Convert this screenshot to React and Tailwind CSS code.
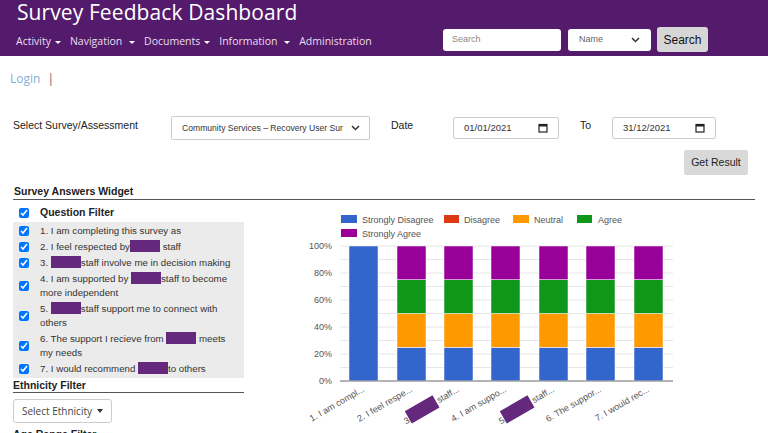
import React from 'react';

const REDACT = 'bg-[#64287c]';

const Redact = () => (
  <span className={`inline-block w-[30px] h-[12px] align-[-2px] ${REDACT}`} />
);

const questions = [
  { id: 1, body: <>1. I am completing this survey as</> },
  { id: 2, body: <>2. I feel respected by<Redact /> staff</> },
  { id: 3, body: <>3. <Redact />staff involve me in decision making</> },
  { id: 4, body: <>4. I am supported by <Redact />staff to become more independent</> },
  { id: 5, body: <>5. <Redact />staff support me to connect with others</> },
  { id: 6, body: <>6. The support I recieve from <Redact /> meets my needs</> },
  { id: 7, body: <>7. I would recommend <Redact />to others</> },
];

const COLORS = {
  sd: '#3366cc',
  d: '#dc3912',
  n: '#ff9900',
  a: '#109618',
  sa: '#990099',
};

const bars = [
  { x: 49, seg: [100, 0, 0, 0, 0] },
  { x: 97, seg: [25, 0, 25, 25, 25] },
  { x: 144, seg: [25, 0, 25, 25, 25] },
  { x: 191, seg: [25, 0, 25, 25, 25] },
  { x: 239, seg: [25, 0, 25, 25, 25] },
  { x: 286, seg: [25, 0, 25, 25, 25] },
  { x: 334, seg: [25, 0, 25, 25, 25] },
];

const labels = ['1. I am compl...', '2. I feel respe...', 'staff...', '4. I am suppo...', 'staff...', '6. The suppor...', '7. I would rec...'];

function Chart() {
  const y0 = 178;
  const h = 135;
  const order = ['sd', 'd', 'n', 'a', 'sa'];
  return (
    <svg width="400" height="230" className="block" style={{ fontFamily: 'Arial, "Liberation Sans", sans-serif' }}>
      {/* legend */}
      <rect x="41" y="12" width="16" height="8" fill={COLORS.sd} />
      <text x="62" y="19.5" fontSize="9" fill="#555">Strongly Disagree</text>
      <rect x="144" y="12" width="15" height="8" fill={COLORS.d} />
      <text x="164" y="19.5" fontSize="9" fill="#555">Disagree</text>
      <rect x="213" y="12" width="16" height="8" fill={COLORS.n} />
      <text x="234" y="19.5" fontSize="9" fill="#555">Neutral</text>
      <rect x="277" y="12" width="15" height="8" fill={COLORS.a} />
      <text x="298" y="19.5" fontSize="9" fill="#555">Agree</text>
      <rect x="41" y="26" width="16" height="8" fill={COLORS.sa} />
      <text x="62" y="33.5" fontSize="9" fill="#555">Strongly Agree</text>

      {/* grid */}
      {Array.from({ length: 11 }).map((_, i) => (
        <line key={i} x1="40" x2="373" y1={y0 - i * 13.5} y2={y0 - i * 13.5} stroke={i === 0 ? '#999' : '#e6e6e6'} strokeWidth="1" />
      ))}
      {[0, 20, 40, 60, 80, 100].map((v) => (
        <text key={v} x="32" y={y0 - (v / 100) * h + 3} fontSize="9" fill="#555" textAnchor="end">{v}%</text>
      ))}

      {/* bars */}
      {bars.map((b, i) => {
        let acc = 0;
        return (
          <g key={i}>
            {b.seg.map((s, j) => {
              if (!s) return null;
              const top = y0 - ((acc + s) / 100) * h;
              const r = <rect key={j} x={b.x} y={top} width="29" height={(s / 100) * h} fill={COLORS[order[j]]} stroke="#fff" strokeWidth="0.5" />;
              acc += s;
              return r;
            })}
          </g>
        );
      })}
      <line x1="40" x2="373" y1={y0} y2={y0} stroke="#999" strokeWidth="1" />

      {/* x labels */}
      {bars.map((b, i) => {
        const cx = b.x + 16;
        const redacted = i === 2 || i === 4;
        return (
          <g key={i} transform={`translate(${cx} ${y0 + 10}) rotate(-30)`}>
            <text x="0" y="0" fontSize="9" fill="#555" textAnchor="end">{labels[i]}</text>
            {redacted && (
              <>
                <text x="-56" y="2" fontSize="9" fill="#555" textAnchor="end">{i === 2 ? '3.' : '5.'}</text>
                <rect x="-58" y="-10" width="32" height="14" fill="#64287c" />
              </>
            )}
          </g>
        );
      })}
    </svg>
  );
}

const Caret = () => (
  <span className="inline-block ml-[4px] align-middle w-0 h-0 border-l-[3px] border-r-[3px] border-t-[3px] border-l-transparent border-r-transparent border-t-white" />
);

const Calendar = () => (
  <svg width="10" height="10" viewBox="0 0 10 10">
    <rect x="1" y="1.5" width="8" height="7.5" fill="none" stroke="#222" strokeWidth="1.2" />
    <rect x="1" y="1.5" width="8" height="2" fill="#222" />
  </svg>
);

const Chevron = () => (
  <svg width="9" height="6" viewBox="0 0 9 6">
    <path d="M1 1l3.5 3.5L8 1" fill="none" stroke="#333" strokeWidth="1.5" />
  </svg>
);

export default function App() {
  return (
    <div className="w-[768px] h-[433px] overflow-hidden bg-white text-[#222]" style={{ fontFamily: 'Arial, "Liberation Sans", sans-serif' }}>
      {/* header */}
      <div className="h-[56px] bg-[#541a6b] flex justify-between">
        <div className="pl-[16px]" style={{ fontFamily: '"Open Sans", sans-serif' }}>
          <div className="text-[21px] leading-[28px] -mt-[2px] text-white tracking-[0.1px] pl-[1px]">Survey Feedback Dashboard</div>
          <div className="flex gap-[9px] mt-[8px] text-[10.5px] leading-[14px] text-[#e8dfee]">
            <span>Activity<Caret /></span>
            <span>Navigation <Caret /></span>
            <span>Documents<Caret /></span>
            <span>Information <Caret /></span>
            <span>Administration</span>
          </div>
        </div>
        <div className="flex items-end gap-[6px] pr-[60px] pb-[4px]">
          <div className="w-[118px] h-[22px] bg-white rounded-[3px] text-[9px] text-[#888] flex items-center px-[9px] mb-[1px]">Search</div>
          <div className="w-[83px] h-[22px] bg-white rounded-[3px] text-[9px] text-[#666] flex items-center justify-between px-[11px] mb-[1px] ml-[1px]">
            <span>Name</span>
            <Chevron />
          </div>
          <div className="w-[51px] h-[25px] bg-[#d6d6d6] rounded-[3px] text-[12px] text-[#111] flex items-center justify-center">Search</div>
        </div>
      </div>

      {/* login */}
      <div className="pl-[10px] pt-[16px] text-[12px] leading-[14px] text-[#86aedb]" style={{ fontFamily: '"Open Sans", sans-serif' }}>
        Login <span className="ml-[4px] text-[#666]">|</span>
      </div>

      {/* form row */}
      <div className="flex items-start mt-[30px] text-[10.5px] leading-[14px]">
        <div className="ml-[13px] w-[158px] mt-[2px]">Select Survey/Assessment</div>
        <div className="w-[199px] h-[24px] border border-[#ccc] rounded-[2px] flex items-center justify-between pl-[10px] pr-[9px] text-[8.6px] text-[#333] whitespace-nowrap overflow-hidden">
          <span>Community Services – Recovery User Sur</span>
          <Chevron />
        </div>
        <div className="ml-[21px] w-[62px] mt-[2px]">Date</div>
        <div className="w-[106px] h-[22px] mt-[1px] border border-[#ccc] rounded-[2px] flex items-center justify-between px-[10px] text-[9.5px] text-[#333]">
          <span>01/01/2021</span>
          <Calendar />
        </div>
        <div className="ml-[21px] w-[32px] mt-[2px]">To</div>
        <div className="w-[104px] h-[22px] mt-[1px] border border-[#ccc] rounded-[2px] flex items-center justify-between px-[10px] text-[9.5px] text-[#333]">
          <span>31/12/2021</span>
          <Calendar />
        </div>
      </div>
      <div className="flex justify-end pr-[20px] mt-[10px]">
        <div className="w-[64px] h-[25px] bg-[#d9d9d9] rounded-[2px] text-[10.5px] text-[#222] flex items-center justify-center">Get Result</div>
      </div>

      {/* widget */}
      <div className="mx-[13px] mt-[9px] border-b-[1.5px] border-[#555] pb-[1px] pl-[1px] text-[10.5px] font-bold leading-[14px]">Survey Answers Widget</div>

      <div className="flex">
        <div className="ml-[13px] w-[231px] shrink-0">
          <div className="flex items-center h-[22px] pt-[3px]">
            <input type="checkbox" defaultChecked className="ml-[6px] w-[10px] h-[10px] accent-[#0075ff]" />
            <span className="ml-[11px] text-[10.5px] font-bold">Question Filter</span>
          </div>
          <div className="bg-[#ebebeb] pt-[1px] pb-[1px]">
            {questions.map((q) => (
              <div key={q.id} className="flex items-center py-[1px]">
                <div className="w-[27px] shrink-0 h-[14px] flex items-center">
                  <input type="checkbox" defaultChecked className="ml-[6px] w-[10px] h-[10px] accent-[#0075ff]" />
                </div>
                <div className="w-[194px] text-[9.7px] leading-[14px] text-[#333]">{q.body}</div>
              </div>
            ))}
          </div>
          <div className="mt-[1px] border-b-[1.5px] border-[#555] pb-[1px] text-[10.5px] font-bold leading-[12px]">Ethnicity Filter</div>
          <div className="mt-[6px] w-[99px] h-[24px] border border-[#ccc] rounded-[3px] flex items-center justify-center text-[10px] text-[#444]" style={{ fontFamily: '"Open Sans", sans-serif' }}>
            Select Ethnicity
            <span className="inline-block ml-[5px] w-0 h-0 border-l-[3.5px] border-r-[3.5px] border-t-[4px] border-l-transparent border-r-transparent border-t-[#333]" />
          </div>
          <div className="mt-[4px] text-[10.5px] font-bold leading-[14px]">Age Range Filter</div>
        </div>
        <div className="ml-[56px] mt-[3px]">
          <Chart />
        </div>
      </div>
    </div>
  );
}
